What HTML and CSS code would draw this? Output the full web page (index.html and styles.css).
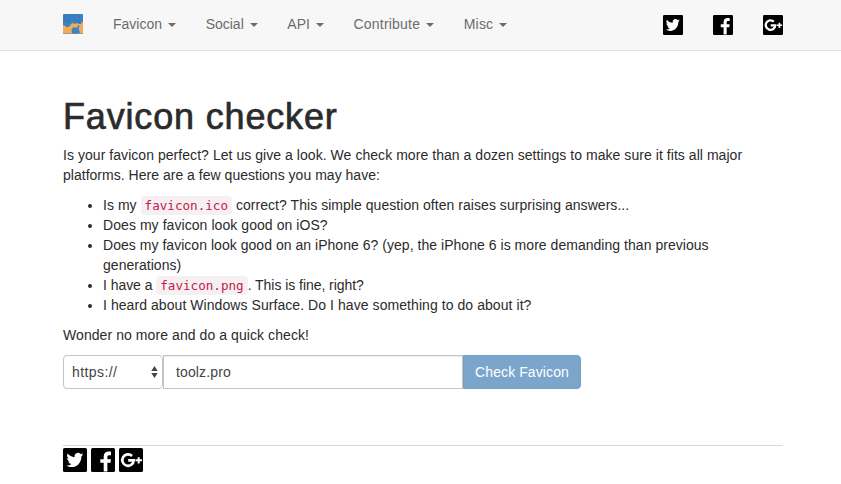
FILE: index.html
```html
<!DOCTYPE html>
<html lang="en">
<head>
<meta charset="utf-8">
<title>Favicon checker</title>
<link rel="stylesheet" href="styles.css">
</head>
<body>
<svg class="symbols" aria-hidden="true">
  <symbol id="twitter" viewBox="0 0 24 24">
    <rect width="24" height="24" rx="1.6" fill="#000"/>
    <path transform="translate(-.6 -.9) scale(1.030 1.080)" fill="#fff" d="M20.2 6.900c-.6.3-1.200.4-1.900.5.7-.4 1.200-1 1.400-1.800-.6.4-1.300.6-2.100.8a3.300 3.300 0 0 0-5.700 3C9.200 9.300 6.700 8 5.100 6a3.300 3.300 0 0 0 1 4.400c-.5 0-1-.2-1.500-.4 0 1.600 1.100 2.900 2.600 3.200-.5.1-1 .2-1.500.1.4 1.300 1.600 2.300 3.100 2.300a6.700 6.700 0 0 1-4.900 1.400c1.500.9 3.200 1.500 5.100 1.500 6.100 0 9.600-5.200 9.400-9.900.7-.5 1.300-1 1.800-1.700z"/>
  </symbol>
  <symbol id="facebook" viewBox="0 0 24 24">
    <rect width="24" height="24" rx="1.6" fill="#000"/>
    <path fill="#fff" d="M12.700 23.500v-8.700H9.300v-3.600h3.400V8.600c0-3.300 2-5 5-5 1.200 0 2 .1 2.300.2v3.400h-1.800c-1.500 0-1.800.7-1.800 1.800v2.200H20l-.5 3.600h-3.100v8.700z"/>
  </symbol>
  <symbol id="google" viewBox="0 0 24 24">
    <rect width="24" height="24" rx="1.6" fill="#000"/>
    <path fill="none" stroke="#fff" stroke-width="2.700" d="M13 8A5.700 5.700 0 1 0 14.700 12.400H9.200"/>
    <path fill="#fff" d="M18.700 9.300h2v2h2.300v2h-2.300v2.200h-2v-2.200h-2.200v-2h2.200z"/>
  </symbol>
</svg>
<nav class="navbar">
  <div class="container navbar-row">
    <a class="brand">
      <svg width="20" height="20" viewBox="0 0 20 20">
        <rect width="20" height="20" rx="1" fill="#3b82c4"/>
        <path fill="none" stroke="#3376b5" d="M1 4a3 3 0 0 1 6 0a3 3 0 0 1-6 0M11 4a3 3 0 0 1 6 0a3 3 0 0 1-6 0M4 8h3m7 0h3"/>
        <path fill="#f0ac58" d="M0 11l2 1h5l1-2 2-1 2 1 2-1 2 1h2l1-2h1v12H0z"/>
        <path fill="#3b82c4" d="M9 20l-.5-4 2-3 3 1 2-3 1 1-1 3 1.500 3-1 2zM3 12h3v1H3z"/>
        <path fill="#8c91a0" d="M0 19.300h20v.7H0z"/>
      </svg>
    </a>
    <ul class="menu">
      <li>Favicon<b class="caret"></b></li>
      <li>Social<b class="caret"></b></li>
      <li>API<b class="caret"></b></li>
      <li class="contribute">Contribute<b class="caret"></b></li>
      <li class="misc">Misc<b class="caret"></b></li>
    </ul>
    <div class="nav-social">
      <svg><use href="#twitter"/></svg>
      <svg><use href="#facebook"/></svg>
      <svg><use href="#google"/></svg>
    </div>
  </div>
</nav>
<main class="container">
  <h1>Favicon checker</h1>
  <p class="intro"><span>Is your favicon perfect? Let us give a look. We check more than a dozen settings to make sure it fits all major</span><br><span class="intro-end">platforms. Here are a few questions you may have:</span></p>
  <ul class="questions">
    <li class="q1">Is my <code>favicon.ico</code> correct? This simple question often raises surprising answers...</li>
    <li class="q2">Does my favicon look good on iOS?</li>
    <li class="q3">Does my favicon look good on an iPhone 6? (yep, the iPhone 6 is more demanding than previous<br>generations)</li>
    <li class="q4">I have a <code>favicon.png</code>. This is fine, right?</li>
    <li class="q5">I heard about Windows Surface. Do I have something to do about it?</li>
  </ul>
  <p class="wonder">Wonder no more and do a quick check!</p>
  <form class="check-form">
    <div class="scheme"><span>https://</span>
      <svg width="7" height="12" viewBox="0 0 7 12"><path fill="#444" d="M3.500 0L6.700 5H.3zM3.500 12L.3 7h6.400z"/></svg>
    </div>
    <input class="host" type="text" value="toolz.pro">
    <button class="submit" type="button">Check Favicon</button>
  </form>
</main>
<footer class="container">
  <div class="footer-social">
    <svg><use href="#twitter"/></svg>
    <svg><use href="#facebook"/></svg>
    <svg><use href="#google"/></svg>
  </div>
</footer>
</body>
</html>
```
FILE: styles.css
```css
* { box-sizing: border-box; }
body {
  margin: 0;
  background: #fff;
  color: #2b2b2b;
  font: 14px/20px "Liberation Sans", Arial, sans-serif;
}
.symbols { display: none; }
svg { display: block; }
.container { width: 720px; margin-left: 63px; }
.navbar { height: 51px; background: #f7f7f7; border-bottom: 1px solid #e2e2e2; }
.navbar-row { display: flex; align-items: center; height: 48px; }
.brand { margin-right: 30px; }
.menu {
  display: flex;
  gap: 29.6px;
  margin: 0;
  padding: 0;
  list-style: none;
  color: #6c6c6c;
}
.menu li { display: flex; align-items: center; white-space: nowrap; }
.contribute { letter-spacing: .2px; }
.misc { letter-spacing: .2px; }
.caret {
  margin: 2px 0 0 6px;
  border: 4px solid transparent;
  border-top-color: #6c6c6c;
  border-bottom: 0;
}
.nav-social { display: flex; gap: 30px; margin-left: auto; padding-top: 2px; }
.nav-social svg { width: 20px; height: 20px; }
h1 {
  margin: 46px 0 8px;
  font-size: 36px;
  font-weight: 500;
  line-height: 40px;
  letter-spacing: .83px;
  -webkit-text-stroke: .7px #2b2b2b;
}
p { margin: 0 0 10px; white-space: nowrap; }
.intro { letter-spacing: .05px; }
.intro-end { letter-spacing: .02px; }
.questions { margin: 0 0 10px; padding-left: 40px; white-space: nowrap; }
.q1 { letter-spacing: .045px; }
.q2, .q5 { letter-spacing: .065px; }
.q3 { letter-spacing: .035px; }
.q4 { letter-spacing: -.05px; }
.wonder { letter-spacing: .075px; }
code {
  padding: 2px 4px;
  border-radius: 4px;
  background: #f7f0f2;
  color: #c0204a;
  font: 12.6px "DejaVu Sans Mono", monospace;
  letter-spacing: 0;
}
.check-form { display: flex; height: 34px; color: #555; }
.scheme {
  display: flex;
  align-items: center;
  justify-content: space-between;
  width: 100px;
  padding: 0 4px 0 8px;
  border: 1px solid #c4c4c4;
  border-radius: 4px;
}
.scheme span { color: #444; letter-spacing: .42px; }
.host {
  width: 300px;
  padding: 0 12px;
  border: 1px solid #c4c4c4;
  background: #fff;
  box-shadow: inset 0 1px 1px rgba(0, 0, 0, .075);
  color: #444;
  font: inherit;
  letter-spacing: .13px;
}
.submit {
  width: 118px;
  padding: 0;
  border: 1px solid #74a0c6;
  border-radius: 0 4px 4px 0;
  background: #7ba5cb;
  color: #fff;
  font: inherit;
  letter-spacing: .1px;
  white-space: nowrap;
}
footer { margin-top: 56px; border-top: 1px solid #d9d9d9; }
.footer-social { display: flex; gap: 4px; padding-top: 2px; }
.footer-social svg { width: 24px; height: 24px; }
```
